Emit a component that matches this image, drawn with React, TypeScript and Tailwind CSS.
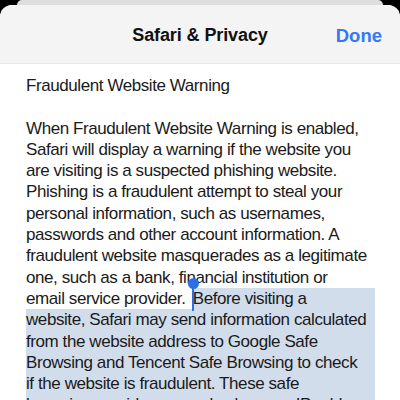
const PLAIN = [
  "When Fraudulent Website Warning is enabled,",
  "Safari will display a warning if the website you",
  "are visiting is a suspected phishing website.",
  "Phishing is a fraudulent attempt to steal your",
  "personal information, such as usernames,",
  "passwords and other account information. A",
  "fraudulent website masquerades as a legitimate",
  "one, such as a bank, financial institution or",
];

const SELECTED = [
  "website, Safari may send information calculated",
  "from the website address to Google Safe",
  "Browsing and Tencent Safe Browsing to check",
  "if the website is fraudulent. These safe",
  "browsing providers may also log your IP address.",
];

export default function App() {
  return (
    <div
      className="w-[400px] h-[400px] overflow-hidden bg-black"
      style={{ fontFamily: "'Liberation Sans', Arial, sans-serif" }}
    >
      {/* stacked sheet behind */}
      <div className="mx-[17px] h-[5px] bg-[#dedede] rounded-t-[10px]" />
      <div className="bg-white rounded-t-[12px] overflow-hidden h-[395px]">
        <div className="h-[59px] bg-[#f4f4f4] border-b border-[#e8e8e8] flex items-center relative">
          <div className="w-full text-center text-[18px] font-bold text-[#111] pt-[2px] tracking-[-0.1px]">
            Safari &amp; Privacy
          </div>
          <div className="absolute right-[18px] top-[17px] text-[18.5px] font-semibold text-[#3478f6]">
            Done
          </div>
        </div>
        <div className="pl-[26px] pr-[25px] pt-[11px] text-[17px] leading-[21.3px] tracking-[-0.42px] text-[#1a1a1a]">
          <div>Fraudulent Website Warning</div>
          <div className="h-[21.3px]" />
          {PLAIN.map((l) => (
            <div key={l} className="h-[21.3px] whitespace-nowrap">
              {l}
            </div>
          ))}
          <div className="h-[21.3px] whitespace-nowrap flex">
            <span className="pr-[3px]">email service provider.&nbsp;</span>
            <span className="flex-1 bg-[#d2ddec] relative">
              Before visiting a
              <span className="absolute left-[-1px] top-[-4px] w-[2px] h-[27px] bg-[#2f6fe4]" />
              <span className="absolute left-[-5px] top-[-10px] w-[11px] h-[11px] rounded-full bg-[#2f6fe4]" />
            </span>
          </div>
          {SELECTED.map((l) => (
            <div key={l} className="h-[21.3px] whitespace-nowrap bg-[#d2ddec]">
              {l}
            </div>
          ))}
        </div>
      </div>
    </div>
  );
}
